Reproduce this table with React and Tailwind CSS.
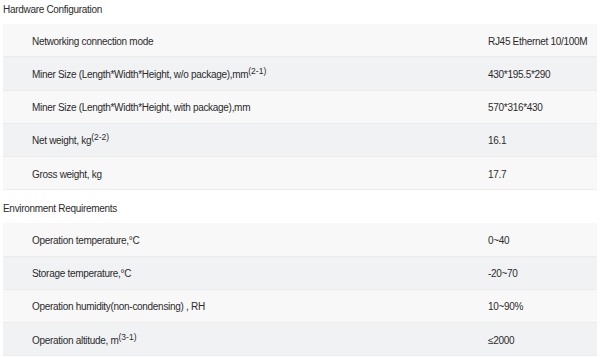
const sections = [
  {
    title: 'Hardware Configuration',
    rows: [
      { label: 'Networking connection mode', value: 'RJ45 Ethernet 10/100M' },
      { label: 'Miner Size (Length*Width*Height, w/o package),mm', sup: '(2-1)', value: '430*195.5*290' },
      { label: 'Miner Size (Length*Width*Height, with package),mm', value: '570*316*430' },
      { label: 'Net weight, kg', sup: '(2-2)', value: '16.1' },
      { label: 'Gross weight, kg', value: '17.7' },
    ],
  },
  {
    title: 'Environment Requirements',
    rows: [
      { label: 'Operation temperature,°C', value: '0~40' },
      { label: 'Storage temperature,°C', value: '-20~70' },
      { label: 'Operation humidity(non-condensing) , RH', value: '10~90%' },
      { label: 'Operation altitude, m', sup: '(3-1)', value: '≤2000' },
    ],
  },
]

export default function App() {
  return (
    <div className="w-[600px] h-[357px] overflow-hidden bg-white text-[10px] tracking-[-0.3px] text-[#2b2b2b] font-['Liberation_Sans',Arial,sans-serif]">
      <div className="-mt-[9px]">
        {sections.map((section) => (
          <div key={section.title}>
            <div className="h-[33px] flex items-center pl-[3px] pt-[3px]">{section.title}</div>
            <div className="mx-[3px]">
              {section.rows.map((row, i) => (
                <div
                  key={row.label}
                  className={`flex items-center h-[33.25px] pt-[2px] border-b border-[#ececec] ${i % 2 === 0 ? 'bg-[#f8f8f8]' : 'bg-[#f1f2f4]'}`}
                >
                  <div className="w-[485px] pl-[29px] whitespace-nowrap">
                    {row.label}
                    {row.sup && <span className="text-[8.5px] tracking-normal relative -top-[4px] align-baseline">{row.sup}</span>}
                  </div>
                  <div className="flex-1 whitespace-nowrap">{row.value}</div>
                </div>
              ))}
            </div>
          </div>
        ))}
      </div>
    </div>
  )
}
